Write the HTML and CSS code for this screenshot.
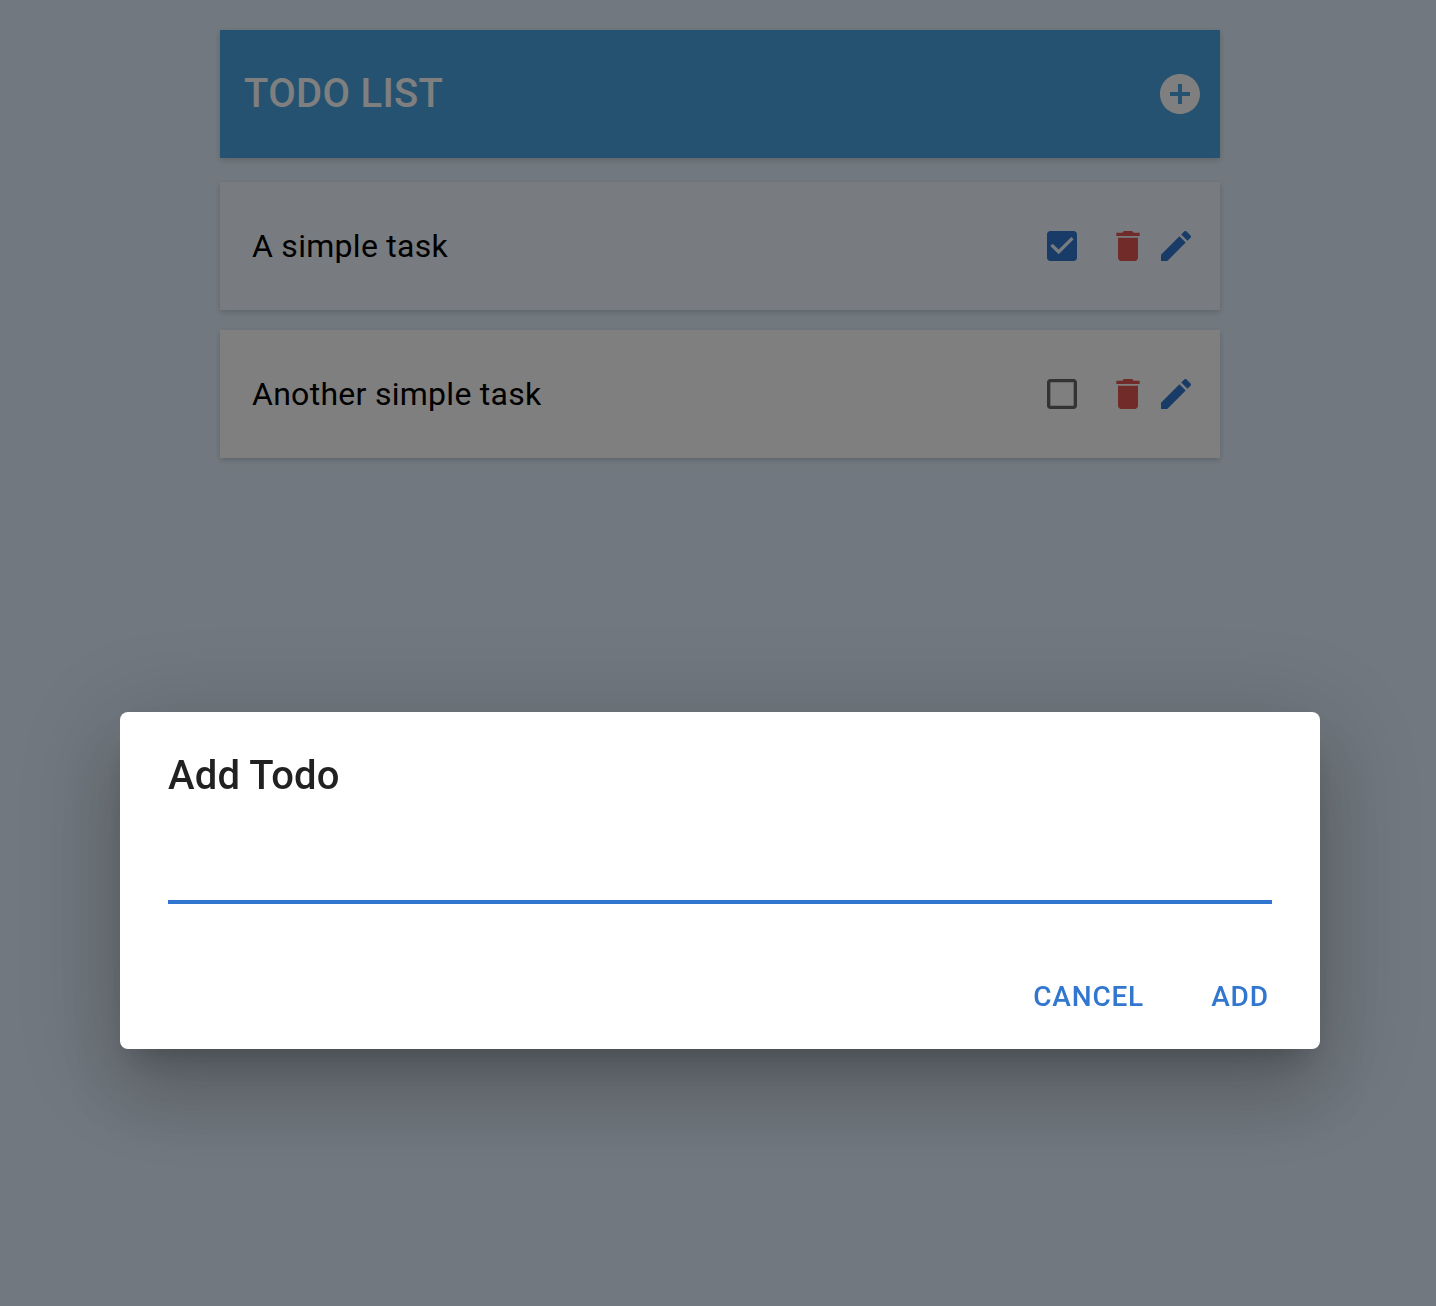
FILE: index.html
```html
<!DOCTYPE html>
<html lang="en">
<head>
<meta charset="utf-8">
<title>Todo List</title>
<link rel="stylesheet" href="styles.css">
</head>
<body>
<main class="app">
  <header class="header paper">
    <h1 class="title">TODO LIST</h1>
    <svg class="icon-add" viewBox="0 0 24 24"><path d="M12 2C6.48 2 2 6.48 2 12s4.48 10 10 10 10-4.48 10-10S17.52 2 12 2zm5 11h-4v4h-2v-4H7v-2h4V7h2v4h4v2z"/></svg>
  </header>
  <ul class="tasks">
    <li class="task task-done paper">
      <span class="task-name">A simple task</span>
      <svg class="icon check primary" viewBox="0 0 24 24"><path d="M19 3H5c-1.110 0-2 .9-2 2v14c0 1.100.89 2 2 2h14c1.110 0 2-.9 2-2V5c0-1.100-.89-2-2-2zm-9 14l-5-5 1.410-1.410L10 14.170l7.590-7.590L19 8l-9 9z"/></svg>
      <svg class="icon danger" viewBox="0 0 24 24"><path d="M6 19c0 1.100.9 2 2 2h8c1.100 0 2-.9 2-2V7H6v12zM19 4h-3.500l-1-1h-5l-1 1H5v2h14V4z"/></svg>
      <svg class="icon primary" viewBox="0 0 24 24"><path d="M3 17.250V21h3.750L17.810 9.940l-3.750-3.750L3 17.250zM20.710 7.040c.39-.39.39-1.020 0-1.410l-2.340-2.340c-.39-.39-1.020-.39-1.410 0l-1.830 1.830 3.750 3.750 1.830-1.830z"/></svg>
    </li>
    <li class="task paper">
      <span class="task-name">Another simple task</span>
      <svg class="icon check muted" viewBox="0 0 24 24"><path d="M19 5v14H5V5h14m0-2H5c-1.100 0-2 .9-2 2v14c0 1.100.9 2 2 2h14c1.100 0 2-.9 2-2V5c0-1.100-.9-2-2-2z"/></svg>
      <svg class="icon danger" viewBox="0 0 24 24"><path d="M6 19c0 1.100.9 2 2 2h8c1.100 0 2-.9 2-2V7H6v12zM19 4h-3.500l-1-1h-5l-1 1H5v2h14V4z"/></svg>
      <svg class="icon primary" viewBox="0 0 24 24"><path d="M3 17.250V21h3.750L17.810 9.940l-3.750-3.750L3 17.250zM20.710 7.040c.39-.39.39-1.020 0-1.410l-2.340-2.340c-.39-.39-1.020-.39-1.410 0l-1.830 1.830 3.750 3.750 1.830-1.830z"/></svg>
    </li>
  </ul>
</main>
<div class="backdrop">
  <section class="dialog" role="dialog" aria-labelledby="dialog-title">
    <h2 class="dialog-title" id="dialog-title">Add Todo</h2>
    <div class="dialog-content"><input class="field" type="text" aria-label="Todo"></div>
    <div class="dialog-actions">
      <button class="button" type="button">CANCEL</button>
      <button class="button" type="button">ADD</button>
    </div>
  </section>
</div>
</body>
</html>
```
FILE: styles.css
```css
* { box-sizing: border-box; }

body {
  margin: 0;
  min-height: 100vh;
  overflow: hidden;
  background: #e3f1fe;
  font-family: Roboto, "Liberation Sans", sans-serif;
}

.app {
  width: 1000px;
  margin-left: 220px;
  padding-top: 30px;
}

.paper {
  box-shadow: 0 2px 6px rgba(0, 0, 0, .18);
}

.header {
  display: flex;
  align-items: center;
  justify-content: space-between;
  height: 128px;
  padding: 0 16px 0 24px;
  background: #48a5e0;
  color: #fff;
}

.title,
.dialog-title {
  margin: 0;
  font-size: 40px;
  font-weight: 500;
  line-height: 64px;
  letter-spacing: .3px;
}

.icon-add {
  width: 48px;
  height: 48px;
  fill: #fff;
}

.tasks {
  display: flex;
  flex-direction: column;
  gap: 20px;
  margin: 24px 0 0;
  padding: 0;
  list-style: none;
}

.task {
  display: flex;
  align-items: center;
  gap: 8px;
  height: 128px;
  padding: 0 24px 0 32px;
  background: #fff;
}

.task-done { background: #f1f7ff; }

.task-name {
  flex: 1;
  font-size: 32px;
  line-height: 48px;
  letter-spacing: .28px;
}

.icon { width: 40px; height: 40px; }
.check { margin-right: 18px; }
.primary { fill: #3277cf; }
.danger { fill: #e25855; }
.muted { fill: rgba(0, 0, 0, .6); }

.backdrop {
  position: fixed;
  inset: 0;
  padding: 712px 116px 0 120px;
  background: rgba(0, 0, 0, .5);
}

.dialog {
  border-radius: 8px;
  background: #fff;
  color: rgba(0, 0, 0, .87);
  box-shadow: 0 22px 30px -14px rgba(0, 0, 0, .2), 0 48px 76px 6px rgba(0, 0, 0, .14), 0 18px 104px 22px rgba(0, 0, 0, .13);
}

.dialog-title {
  padding: 32px 48px 0;
  letter-spacing: .18px;
}

.dialog-content { padding: 32px 48px 40px; }

.field {
  display: block;
  width: 100%;
  height: 64px;
  padding: 8px 0 10px;
  border: 0;
  border-bottom: 4px solid #3277cf;
  outline: 0;
  background: none;
  font: 32px Roboto, "Liberation Sans", sans-serif;
}

.dialog-actions {
  display: flex;
  justify-content: flex-end;
  gap: 16px;
  padding: 16px;
}

.button {
  min-width: 128px;
  height: 73px;
  padding: 12px 16px;
  border: 0;
  background: none;
  color: #3277cf;
  font: 500 28px/49px Roboto, "Liberation Sans", sans-serif;
  letter-spacing: .8px;
}
```
